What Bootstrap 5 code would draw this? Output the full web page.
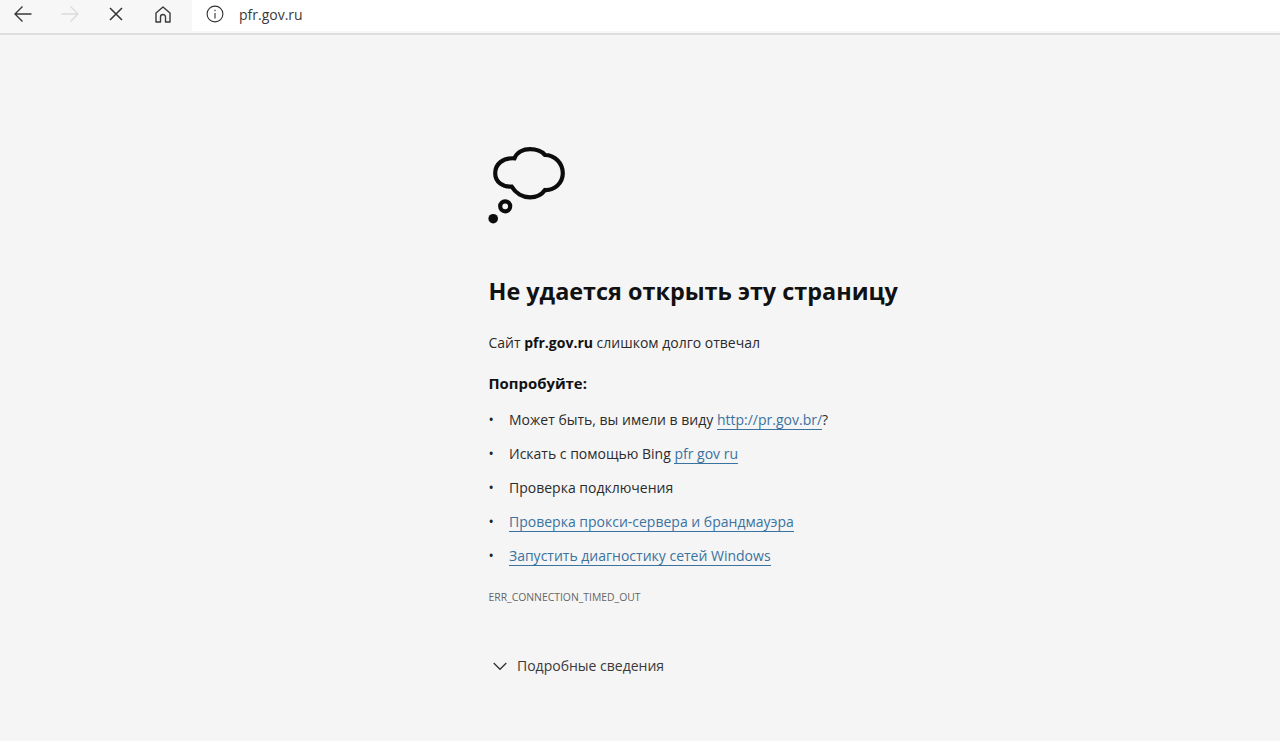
<!DOCTYPE html>
<html lang="ru">
<head>
    <meta charset="UTF-8">
    <meta name="viewport" content="width=device-width, initial-scale=1.0">
    <title>pfr.gov.ru</title>
    <link href="https://cdn.jsdelivr.net/npm/bootstrap@5.3.1/dist/css/bootstrap.min.css" rel="stylesheet">
    <style>
        html, body { height: 100%; }
        body {
            font-family: "Open Sans", "Noto Sans", sans-serif;
            background: #f5f5f5;
            color: #2b2b2b;
            overflow: hidden;
        }
        .top-bar {
            height: 35px;
            background: #f7f7f7;
            border-bottom: 2px solid #dedede;
        }
        .tool-btn {
            width: 46.5px;
            height: 28px;
            padding: 0;
            border: 0;
            background: none;
        }
        .addr-box {
            width: 1088px;
            height: 31px;
            padding-left: 14px;
            padding-bottom: 3px;
            background: #fff;
            font-size: 14px;
            color: #3a3a3a;
        }
        .addr-box svg { margin-right: 15px; }
        .err-wrap {
            width: 450px;
            margin-left: 488.5px;
            padding-top: 111px;
        }
        .cloud-icon { overflow: visible; }
        .err-title {
            margin: 51px 0 0;
            font-size: 23.4px;
            line-height: 32px;
            font-weight: 700;
            color: #111;
        }
        .err-text { margin: 26px 0 0; font-size: 14px; line-height: 20px; }
        .err-text b { color: #111; }
        .try-head { margin: 20px 0 0; font-size: 14.9px; line-height: 20px; font-weight: 700; color: #111; }
        .try-list { margin: 10px 0 0; padding: 0; list-style: none; font-size: 14px; line-height: 20px; }
        .try-list li { display: flex; height: 34px; padding-top: 7px; }
        .try-list li::before { content: "•"; width: 20.5px; flex: none; font-size: 14px; color: #222; }
        .try-list a { color: #3a72a0; text-decoration: none; border-bottom: 1px solid #3a72a0; height: 20px; }
        .err-code { margin: 16px 0 0; font-size: 10.4px; line-height: 16px; color: #666; }
        .more-row { margin-top: 51px; font-size: 14px; line-height: 20px; color: #3a3a3a; gap: 10px; padding-left: 4.5px; }
    </style>
</head>
<body>
    <div class="top-bar d-flex align-items-start">
        <button class="tool-btn d-flex align-items-center justify-content-center" type="button" aria-label="Назад">
            <svg width="20" height="18" viewBox="0 0 20 18" fill="none" stroke="#3a3a3a" stroke-width="1.4"><path d="M18.500 9H2M9.500 1.500 2 9l7.500 7.500"/></svg>
        </button>
        <button class="tool-btn d-flex align-items-center justify-content-center" type="button" aria-label="Вперёд">
            <svg width="20" height="18" viewBox="0 0 20 18" fill="none" stroke="#dcdcdc" stroke-width="1.4"><path d="M1.500 9H18M10.500 1.500 18 9l-7.500 7.500"/></svg>
        </button>
        <button class="tool-btn d-flex align-items-center justify-content-center" type="button" aria-label="Стоп">
            <svg width="14" height="14" viewBox="0 0 14 14" fill="none" stroke="#333" stroke-width="1.5"><path d="M1 1l12 12M13 1 1 13"/></svg>
        </button>
        <button class="tool-btn d-flex align-items-center justify-content-center" type="button" aria-label="Домой">
            <svg width="16" height="17" viewBox="0 0 16 17" fill="none" stroke="#3a3a3a" stroke-width="1.4" stroke-linejoin="round"><path d="M1 7 8 1l7 6v9h-4.500v-5a2.500 2.500 0 0 0-5 0v5H1z"/></svg>
        </button>
        <div class="addr-box d-flex align-items-center ms-auto">
            <svg width="18" height="18" viewBox="0 0 18 18" fill="none" stroke="#333" stroke-width="1.1"><circle cx="9" cy="9" r="7.900"/><path d="M9 8v5.500M9 4.800v1.400"/></svg>
            <span>pfr.gov.ru</span>
        </div>
    </div>

    <main class="err-wrap">
        <svg class="d-block cloud-icon" width="78" height="78" viewBox="0 0 78 78" fill="none" stroke="#0c0c0c" stroke-width="4.200">
            <path d="M25.500 12.300C28 6 34.500 3.200 41 3.200 47.500 3.200 52.500 5 56 9 65.500 9 73.800 17 73.800 27.300 73.800 37 65.500 44.500 56 44 52.500 49 47 51.300 41 51.300 33.500 51.300 26.500 47 22.700 40.700 13.500 41 6.200 36 6.200 27.300 6.200 18 14 11.500 25.500 12.300z"/>
            <circle cx="16.200" cy="60.300" r="5"/>
            <circle cx="4.200" cy="72.700" r="4.800" fill="#0c0c0c" stroke="none"/>
        </svg>
        <h1 class="err-title">Не удается открыть эту страницу</h1>
        <p class="err-text">Сайт <b>pfr.gov.ru</b> слишком долго отвечал</p>
        <p class="try-head">Попробуйте:</p>
        <ul class="try-list">
            <li><span>Может быть, вы имели в виду <a href="#">http://pr.gov.br/</a>?</span></li>
            <li><span>Искать с помощью Bing <a href="#">pfr gov ru</a></span></li>
            <li><span>Проверка подключения</span></li>
            <li><span><a href="#">Проверка прокси-сервера и брандмауэра</a></span></li>
            <li><span><a href="#">Запустить диагностику сетей Windows</a></span></li>
        </ul>
        <p class="err-code">ERR_CONNECTION_TIMED_OUT</p>
        <div class="more-row d-flex align-items-center">
            <svg width="14" height="9" viewBox="0 0 14 9" fill="none" stroke="#333" stroke-width="1.300"><path d="M.7 1 7 7.300 13.300 1"/></svg>
            <span>Подробные сведения</span>
        </div>
    </main>

    <script src="https://cdn.jsdelivr.net/npm/bootstrap@5.3.1/dist/js/bootstrap.bundle.min.js"></script>
</body>
</html>
